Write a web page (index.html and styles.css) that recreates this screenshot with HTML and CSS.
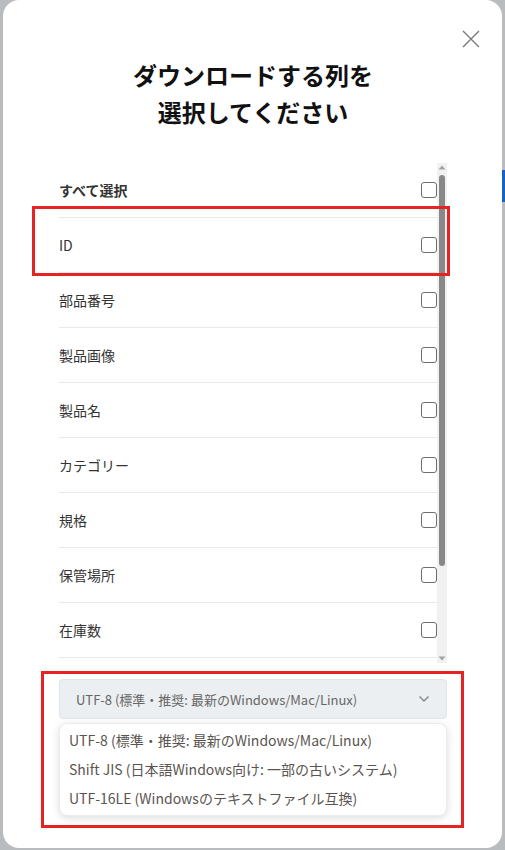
FILE: index.html
```html
<!DOCTYPE html>
<html lang="ja">
<head>
<meta charset="utf-8">
<title>ダウンロードする列を選択</title>
<link rel="stylesheet" href="styles.css">
</head>
<body>
<div class="bg-hint"></div>
<div class="modal">
  <button class="close" aria-label="閉じる">
    <svg width="18" height="18" viewBox="0 0 18 18"><path d="M1 1L17 17M17 1L1 17" stroke="#7a7a7a" stroke-width="1.4" fill="none"/></svg>
  </button>
  <h2 class="title">ダウンロードする列を<br>選択してください</h2>
  <div class="list-wrap">
    <div class="list">
      <label class="row all"><span>すべて選択</span><input type="checkbox" class="cb"></label>
      <label class="row"><span>ID</span><input type="checkbox" class="cb"></label>
      <label class="row"><span>部品番号</span><input type="checkbox" class="cb"></label>
      <label class="row"><span>製品画像</span><input type="checkbox" class="cb"></label>
      <label class="row"><span>製品名</span><input type="checkbox" class="cb"></label>
      <label class="row"><span>カテゴリー</span><input type="checkbox" class="cb"></label>
      <label class="row"><span>規格</span><input type="checkbox" class="cb"></label>
      <label class="row"><span>保管場所</span><input type="checkbox" class="cb"></label>
      <label class="row"><span>在庫数</span><input type="checkbox" class="cb"></label>
      <label class="row"><span>単位</span><input type="checkbox" class="cb"></label>
      <label class="row"><span>備考</span><input type="checkbox" class="cb"></label>
    </div>
    <div class="scrollbar" aria-hidden="true">
      <svg class="arrow" width="10" height="10" viewBox="0 0 10 10"><path d="M1.5 6.5L5 2.5L8.5 6.5Z" fill="#a3a3a3"/></svg>
      <div class="track"><div class="thumb"></div></div>
      <svg class="arrow" width="10" height="10" viewBox="0 0 10 10"><path d="M1.5 3.5L8.5 3.5L5 7.5Z" fill="#a3a3a3"/></svg>
    </div>
  </div>
  <div class="select">
    <span>UTF-8 (標準・推奨: 最新のWindows/Mac/Linux)</span>
    <svg width="12" height="8" viewBox="0 0 12 8"><path d="M1.5 1.5L6 6L10.5 1.5" stroke="#8a8a8a" stroke-width="1.5" fill="none"/></svg>
  </div>
  <ul class="options">
    <li>UTF-8 (標準・推奨: 最新のWindows/Mac/Linux)</li>
    <li>Shift JIS (日本語Windows向け: 一部の古いシステム)</li>
    <li>UTF-16LE (Windowsのテキストファイル互換)</li>
  </ul>
</div>
<div class="mark mark-id"></div>
<div class="mark mark-select"></div>
</body>
</html>
```

FILE: styles.css
```css
html, body {
  margin: 0;
  padding: 0;
}
body {
  background: #b9bcbf;
  width: 505px;
  height: 850px;
  overflow: hidden;
  position: relative;
  font-family: "Noto Sans CJK JP", sans-serif;
  color: #333;
}
.bg-hint {
  position: absolute;
  left: 502px;
  top: 170px;
  width: 3px;
  height: 32px;
  background: #1565c0;
}
.modal {
  position: relative;
  margin-left: 3px;
  width: 499px;
  height: 848px;
  box-sizing: border-box;
  background: #fff;
  border-radius: 16px;
  padding: 56px 55px 0 56px;
  display: flex;
  flex-direction: column;
}
.close {
  position: absolute;
  top: 30px;
  right: 22px;
  width: 18px;
  height: 18px;
  padding: 0;
  border: 0;
  background: none;
  display: flex;
}
.title {
  margin: 0;
  font-size: 24px;
  font-weight: 700;
  line-height: 37px;
  color: #111;
  text-align: center;
}
.list-wrap {
  margin-top: 33px;
  height: 500px;
  display: flex;
  flex: none;
}
.list {
  flex: 1;
  overflow: hidden;
}
.scrollbar {
  width: 10px;
  background: #f1f1f1;
  display: flex;
  flex-direction: column;
}
.arrow {
  display: block;
  flex: none;
}
.track {
  flex: 1;
  padding: 2px 2px 0;
}
.thumb {
  height: 391px;
  background: #888;
  border-radius: 3px;
}
.row {
  display: flex;
  align-items: center;
  justify-content: space-between;
  height: 55px;
  box-sizing: border-box;
  border-bottom: 1px solid #e9e9e9;
  font-size: 14px;
}
.row.all {
  font-weight: 700;
}
.cb {
  appearance: none;
  -webkit-appearance: none;
  margin: 0;
  width: 16px;
  height: 16px;
  border: 1.5px solid #6e6e6e;
  border-radius: 3px;
  box-sizing: border-box;
  background: #fff;
}
.select {
  margin-top: 16px;
  height: 40px;
  box-sizing: border-box;
  border: 1px solid #e2e5e8;
  border-radius: 4px;
  background: #eceff1;
  display: flex;
  align-items: center;
  justify-content: space-between;
  padding: 0 16px 0 16px;
  font-size: 13px;
  color: #666;
}
.options {
  list-style: none;
  margin: 4px 0 0;
  padding: 2px 0;
  border: 1px solid #ececec;
  border-radius: 8px;
  box-shadow: 0 2px 8px rgba(0, 0, 0, 0.14);
  background: #fff;
}
.options li {
  height: 29px;
  line-height: 29px;
  padding: 0 9px;
  font-size: 14px;
  color: #5a5550;
}
.mark {
  position: absolute;
  border: 3px solid #e52323;
  box-sizing: border-box;
}
.mark-id {
  left: 32px;
  top: 206px;
  width: 418px;
  height: 70px;
}
.mark-select {
  left: 41px;
  top: 671px;
  width: 423px;
  height: 157px;
}
```
